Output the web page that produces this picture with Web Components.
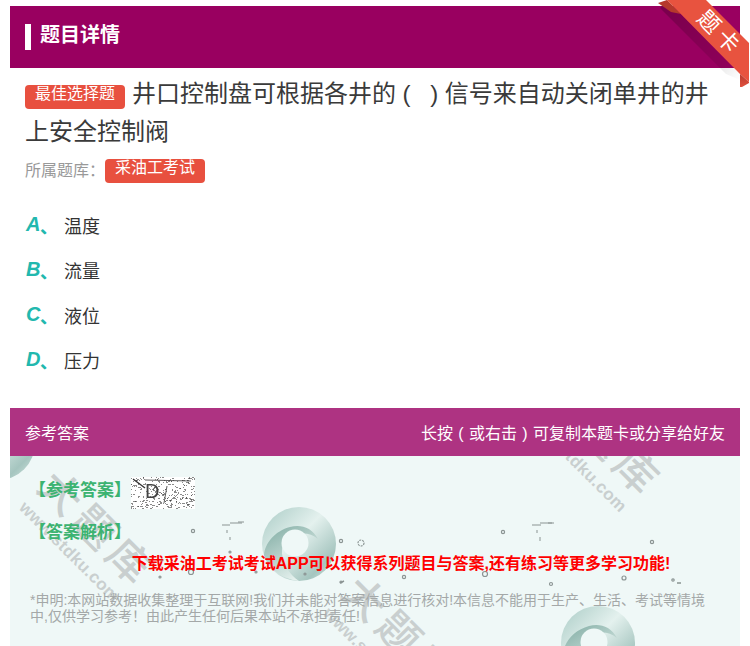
<!DOCTYPE html>
<html lang="zh"><head><meta charset="utf-8">
<style>
html,body{margin:0;padding:0;background:#fff;height:646px;overflow:hidden}
body{font-family:"Liberation Sans","Noto Sans CJK SC",sans-serif;color:#333}
</style></head><body>
<exam-card>
  <detail-head slot="head">题目详情</detail-head>
  <corner-ribbon slot="ribbon">题卡</corner-ribbon>
  <question-body slot="body" kind="最佳选择题" bank="采油工考试">井口控制盘可根据各井的<wide-paren>(</wide-paren> <wide-paren>)</wide-paren>信号来自动关闭单井的井上安全控制阀</question-body>
  <option-row slot="body" letter="A">温度</option-row>
  <option-row slot="body" letter="B">流量</option-row>
  <option-row slot="body" letter="C">液位</option-row>
  <option-row slot="body" letter="D">压力</option-row>
  <answer-panel slot="answer"></answer-panel>
</exam-card>
<script>
function def(name,css,html,init){
  customElements.define(name,class extends HTMLElement{
    connectedCallback(){
      if(this.shadowRoot)return;
      const r=this.attachShadow({mode:'open'});
      r.innerHTML='<style>'+css+'</style>'+(typeof html==='function'?html(this):html);
      if(init)init(r,this);
    }
  });
}
def('wide-paren',`:host{display:inline-block;width:21px;text-align:center}`,`<slot></slot>`);
def('exam-card',`
:host{display:block;position:relative;width:750px;height:646px;overflow:hidden}
.wrap{display:flex;flex-direction:column;margin:6px 10px 0;width:730px}
`,`<div class="wrap"><slot name="head"></slot><slot name="body"></slot><slot name="answer"></slot></div><slot name="ribbon"></slot>`);
def('detail-head',`
:host{display:flex;align-items:center;height:62px;background:#990060;color:#fff;font-size:20px;font-weight:700;padding-left:15px;gap:9px;box-sizing:border-box}
i{display:block;width:6px;height:26px;background:#fff}
span{position:relative;top:-4px}
`,`<i></i><span><slot></slot></span>`);
def('corner-ribbon',`
:host{display:block;position:absolute;left:650px;top:0;width:100px;height:92px}
svg{position:absolute;inset:0}
b{position:absolute;left:33px;top:17px;width:70px;height:30px;line-height:30px;text-align:center;color:#fff;font-size:22px;font-weight:400;letter-spacing:5px;text-indent:5px;transform:rotate(45deg);white-space:nowrap}
`,`<svg width="100" height="92" viewBox="0 0 100 92"><defs>
<linearGradient id="g" x1="0" y1="0" x2="1" y2="1"><stop offset="0" stop-color="#000" stop-opacity=".22"/><stop offset=".8" stop-color="#000" stop-opacity=".08"/><stop offset="1" stop-color="#000" stop-opacity="0"/></linearGradient>
<linearGradient id="t" x1="0" y1="0" x2="0" y2="1"><stop offset="0" stop-color="#b93a2d"/><stop offset="1" stop-color="#e0513f"/></linearGradient></defs>
<path d="M17 0 L90 74 L90 80 L76 74 L10 8Z" fill="url(#g)"/>
<path d="M8 3 L17 0 L31 14 L21 12Z" fill="#b5392c"/>
<path d="M17 0 L56 0 L99 43 L99 82 L90 74Z" fill="#e8533f"/>
<path d="M90 74 L99 82 L99 83 L92 87 L90 87Z" fill="url(#t)"/></svg><b><slot></slot></b>`);
def('question-body',`
:host{display:block;padding:7px 15px 19px}
.q{font-size:24px;line-height:38px;color:#3a3a3a;margin:0}
.tag{display:inline-block;vertical-align:3px;background:#e8503f;color:#fff;font-size:16px;line-height:18px;height:24px;padding:0 10px;border-radius:4px;font-weight:400;margin-right:7px}
.bank{display:flex;align-items:center;font-size:16px;color:#999;margin-top:8px;height:24px;line-height:24px}
.bank .tag{margin:0}
`,h=>`<p class="q"><span class="tag">${h.getAttribute('kind')}</span><slot></slot></p><div class="bank">所属题库：<span class="tag">${h.getAttribute('bank')}</span></div>`);
def('option-row',`
:host{display:flex;align-items:center;height:45px;padding-left:16px;font-size:18px;color:#333}
b{font-style:italic;font-size:20px;color:#22b8ae;width:14px}
u{text-decoration:none;color:#22b8ae;font-size:18px;width:24px;font-weight:700}
`,h=>`<b>${h.getAttribute('letter')}</b><u>、</u><span><slot></slot></span>`);
def('water-mark',`
:host{display:block;position:absolute;transform-origin:0 0;transform:rotate(45deg);color:#c9cfcf;white-space:nowrap;pointer-events:none}
.big{display:block;font-size:42px;line-height:42px;font-weight:500;letter-spacing:6px}
.url{display:block;font-size:17px;line-height:24px;font-weight:700;letter-spacing:.4px;margin:2px 0 0 2px}
`,`<span class="big">大题库</span><span class="url">www.stdku.com</span>`);
def('swirl-ring',`
:host{display:block;position:absolute;width:74px;height:74px}
svg{display:block}
`,`<svg width="74" height="74" viewBox="0 0 74 74"><defs>
<linearGradient id="a" x1="0" y1="0" x2="1" y2="1"><stop offset="0" stop-color="#a9cbc5"/><stop offset=".45" stop-color="#e4f1ee"/><stop offset=".8" stop-color="#a5c5bf"/><stop offset="1" stop-color="#d9eae6"/></linearGradient>
<linearGradient id="b" x1=".1" y1=".15" x2=".6" y2="1"><stop offset="0" stop-color="#8fb6ae"/><stop offset="1" stop-color="#e8f3f0"/></linearGradient></defs>
<circle cx="37" cy="37" r="37" fill="url(#a)"/>
<path d="M56 32C50 20 38 17 28 20 13 24 3 36 2 48 6 62 20 72 37 74 27 67 19 55 20 42 21 30 42 20 56 32Z" fill="url(#b)"/>
<circle cx="33" cy="36" r="13.500" fill="#eff8f7"/></svg>`);
def('speck-field',`
:host{display:block;position:absolute;left:0;top:0;width:730px;height:190px;pointer-events:none}
`,`<svg width="730" height="190" viewBox="0 0 730 190" fill="none" stroke="#8b9493">
<path d="M212 69h8M220 67h12M228 66h6M217 74v3M220 81v3M522 69h9M530 67h12M538 67h6M527 74v3M530 81v4" stroke-width="1"/>
<g stroke-width="1.2"><circle cx="183" cy="75" r="1.600"/><circle cx="181" cy="116" r="2.500"/><circle cx="331" cy="85" r="1.600"/><circle cx="351" cy="87" r="3" stroke-dasharray="2 1"/><circle cx="493" cy="76" r="1.600"/><circle cx="642" cy="86" r="1.600"/><circle cx="475" cy="118" r="2.500"/><circle cx="394" cy="121" r="1.600"/><circle cx="295" cy="118" r="1"/><circle cx="150" cy="121" r="1"/><circle cx="152" cy="104" r="1"/><circle cx="220" cy="96" r="1"/><circle cx="246" cy="116" r="1"/><circle cx="521" cy="104" r="1"/><circle cx="541" cy="128" r="1.500"/><circle cx="614" cy="122" r="2"/><circle cx="663" cy="124" r="1.200"/><circle cx="467" cy="105" r="1"/><circle cx="403" cy="110" r="1"/><circle cx="331" cy="126" r="1"/></g>
<path d="M667 127h4M330 127l4-2" stroke-width="1.400"/></svg>`);
def('noise-box',`
:host{display:inline-block;position:relative;width:64px;height:32px;background:#fff;overflow:hidden;margin-top:9px}
canvas{position:absolute;inset:0}
b{position:absolute;left:14px;top:2px;font-weight:400;font-size:20px;line-height:24px;color:#444}
`,`<canvas width="64" height="32"></canvas><b>D</b>`,r=>{
  const c=r.querySelector('canvas').getContext('2d');let s=7;
  const R=()=>(s=(s*16807)%2147483647)/2147483647;
  c.fillStyle='rgba(60,60,60,.6)';
  for(let i=0;i<300;i++){const x=R()*64,y=R()*32;c.fillRect(x|0,y|0,R()>.7?2:1,1);}
  c.strokeStyle='#333';c.lineWidth=1.4;c.beginPath();c.moveTo(2,2);c.lineTo(14,11);c.stroke();
  c.lineWidth=.8;c.beginPath();c.moveTo(14,3);c.lineTo(60,4);c.moveTo(36,9);c.lineTo(33,26);c.stroke();
});
def('answer-panel',`
:host{display:block;margin-top:26px;position:relative}
.bar{display:flex;justify-content:space-between;align-items:center;height:48px;background:#ae3382;color:#fff;font-size:16px;padding:0 15px;position:relative;z-index:3}
.bar wide-paren{width:1em}
.body{position:relative;height:190px;background:#eff8f7;overflow:hidden;box-sizing:border-box;padding:16px 19px 0}
.row{display:flex;align-items:center;gap:0;height:32px;color:#3cb371;font-weight:700;font-size:17px;position:relative}
.row2{margin-top:11px;height:30px}
.promo{position:relative;margin:7px -19px 0;text-align:center;color:#f00;font-weight:700;font-size:16px;line-height:24px;padding-left:52px}
.note{position:relative;color:#a4a8a8;font-size:14px;line-height:16px;margin:16px 14px 0 1px}
`,`<div class="bar"><span>参考答案</span><span>长按<wide-paren>(</wide-paren>或右击<wide-paren>)</wide-paren>可复制本题卡或分享给好友</span></div>
<div class="body">
<swirl-ring style="left:-49px;top:-50px"></swirl-ring>
<swirl-ring style="left:252px;top:51px"></swirl-ring>
<swirl-ring style="left:551px;top:150px"></swirl-ring>
<speck-field></speck-field>
<water-mark style="left:50px;top:8px"></water-mark>
<water-mark style="left:557px;top:-82px"></water-mark>
<water-mark style="left:354px;top:114px"></water-mark>
<div class="row"><span>【参考答案】</span><noise-box></noise-box></div>
<div class="row row2"><span>【答案解析】</span></div>
<div class="promo">下载采油工考试考试APP可以获得系列题目与答案,还有练习等更多学习功能!</div>
<div class="note">*申明:本网站数据收集整理于互联网!我们并未能对答案信息进行核对!本信息不能用于生产、生活、考试等情境中,仅供学习参考！由此产生任何后果本站不承担责任!</div>
</div>`);
</script>
</body></html>
